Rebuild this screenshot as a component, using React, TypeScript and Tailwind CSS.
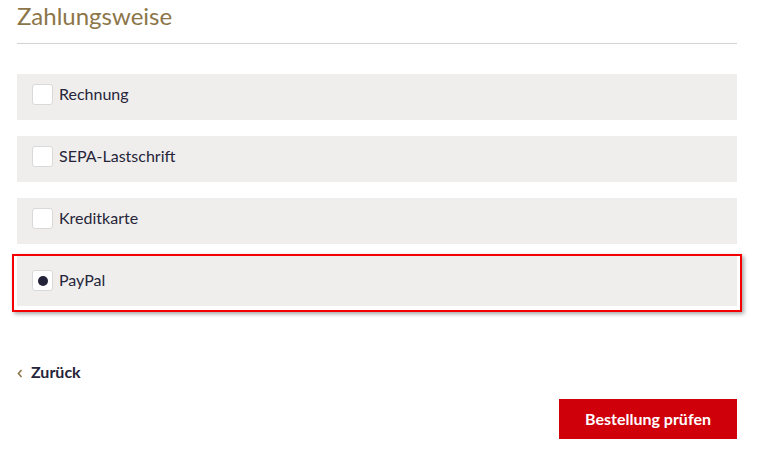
import React from "react";

const font = { fontFamily: "Lato, 'Open Sans', sans-serif" };

function Box({ checked }: { checked?: boolean }) {
  return (
    <span className="flex h-[21px] w-[21px] shrink-0 items-center justify-center rounded-[3px] border border-[#d9d9d9] bg-white">
      {checked && <span className="h-[10px] w-[10px] rounded-full bg-[#23233a]" />}
    </span>
  );
}

function Row({ label }: { label: string }) {
  return (
    <div className="flex h-[46px] items-start bg-[#efeeec] pl-[15px] pt-[10px]">
      <div className="flex items-start gap-[6px]">
        <Box />
        <span className="text-[16px] leading-[20px] text-[#26253a]">{label}</span>
      </div>
    </div>
  );
}

export default function App() {
  return (
    <div className="h-[454px] w-[763px] bg-white" style={font}>
      <div className="w-[737px] pl-[17px]">
        <div className="border-b border-[#d3d3d3] pb-[13px] pt-[1px]">
          <h1 className="text-[24px] font-normal leading-[29px] text-[#8c7649]">Zahlungsweise</h1>
        </div>
        <div className="mt-[30px] flex flex-col gap-[16px]">
          <Row label="Rechnung" />
          <Row label="SEPA-Lastschrift" />
          <Row label="Kreditkarte" />
        </div>
        <div className="-ml-[5px] mt-[10px] w-[730px] border-2 border-[#f50000] bg-white pb-[4px] pl-[3px] pr-[3px] shadow-[2px_2px_4px_rgba(0,0,0,0.35)]">
          <div className="flex h-[50px] items-start bg-[#efeeec] pl-[15px] pt-[14px]">
            <div className="flex items-start gap-[6px]">
              <Box checked />
              <span className="text-[16px] leading-[20px] text-[#26253a]">PayPal</span>
            </div>
          </div>
        </div>
        <div className="mt-[50px] flex items-center gap-[8px]">
          <svg width="6" height="9" viewBox="0 0 6 9" className="mt-[2px]">
            <path d="M4.5 1 L1.5 4.5 L4.5 8" fill="none" stroke="#8c7649" strokeWidth="1.6" />
          </svg>
          <span className="text-[16px] font-bold leading-[20px] text-[#26253a]">Zurück</span>
        </div>
        <div className="mt-[17px] flex justify-end">
          <button className="flex h-[40px] w-[178px] items-center justify-center bg-[#d0000b] text-[16px] font-bold text-white">
            Bestellung prüfen
          </button>
        </div>
      </div>
    </div>
  );
}
